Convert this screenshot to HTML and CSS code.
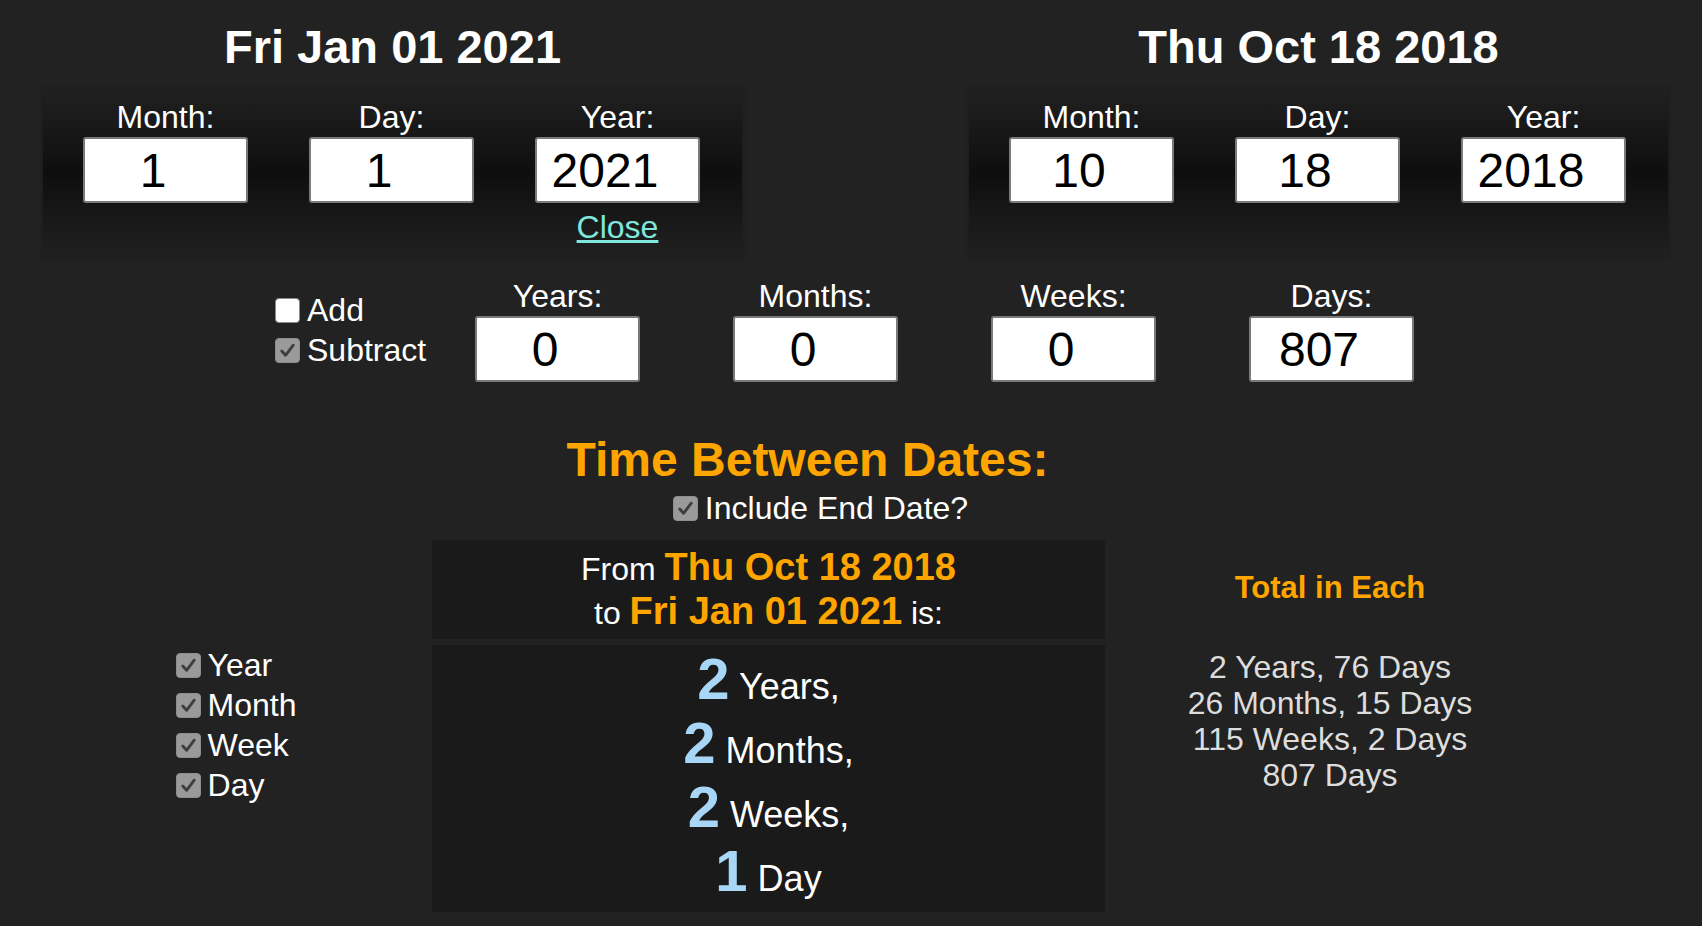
FILE: index.html
```html
<!DOCTYPE html>
<html lang="en">
  <head>
    <meta charset="UTF-8" />
    <meta name="viewport" content="width=device-width, initial-scale=1.0" />
    <title>Time Between Dates</title>
    <link rel="stylesheet" href="styles.css">
  </head>
  <body>
    <div class="dates">
      <div class="date-block">
        <h2 class="date-title">Fri Jan 01 2021</h2>
        <div class="picker">
          <div class="field">
            <label>Month:</label>
            <input class="num" type="text" value="1">
          </div>
          <div class="field">
            <label>Day:</label>
            <input class="num" type="text" value="1">
          </div>
          <div class="field">
            <label>Year:</label>
            <input class="num" type="text" value="2021">
            <a class="close" href="#">Close</a>
          </div>
        </div>
      </div>
      <div class="date-block">
        <h2 class="date-title">Thu Oct 18 2018</h2>
        <div class="picker">
          <div class="field">
            <label>Month:</label>
            <input class="num" type="text" value="10">
          </div>
          <div class="field">
            <label>Day:</label>
            <input class="num" type="text" value="18">
          </div>
          <div class="field">
            <label>Year:</label>
            <input class="num" type="text" value="2018">
          </div>
        </div>
      </div>
    </div>

    <div class="adjust">
      <div class="ops">
        <label class="check"><span class="box"></span>Add</label>
        <label class="check"><span class="box on"><svg viewBox="0 0 24 24"><path d="M6 12.5 L10 17 L18 6.5"/></svg></span>Subtract</label>
      </div>
      <div class="field">
        <label>Years:</label>
        <input class="num" type="text" value="0">
      </div>
      <div class="field">
        <label>Months:</label>
        <input class="num" type="text" value="0">
      </div>
      <div class="field">
        <label>Weeks:</label>
        <input class="num" type="text" value="0">
      </div>
      <div class="field">
        <label>Days:</label>
        <input class="num" type="text" value="807">
      </div>
    </div>

    <div class="between">
      <h1 class="between-title">Time Between Dates:</h1>
      <div class="include">
        <label class="check"><span class="box on"><svg viewBox="0 0 24 24"><path d="M6 12.5 L10 17 L18 6.5"/></svg></span>Include End Date?</label>
      </div>

      <div class="summary">
        From <span class="hl">Thu Oct 18 2018</span><br>
        to <span class="hl">Fri Jan 01 2021</span> is:
      </div>
      <div class="totals">
        <div class="totals-title">Total in Each</div>
        <div>2 Years, 76 Days</div>
        <div>26 Months, 15 Days</div>
        <div>115 Weeks, 2 Days</div>
        <div>807 Days</div>
      </div>

      <div class="units">
        <label class="check"><span class="box on"><svg viewBox="0 0 24 24"><path d="M6 12.5 L10 17 L18 6.5"/></svg></span>Year</label>
        <label class="check"><span class="box on"><svg viewBox="0 0 24 24"><path d="M6 12.5 L10 17 L18 6.5"/></svg></span>Month</label>
        <label class="check"><span class="box on"><svg viewBox="0 0 24 24"><path d="M6 12.5 L10 17 L18 6.5"/></svg></span>Week</label>
        <label class="check"><span class="box on"><svg viewBox="0 0 24 24"><path d="M6 12.5 L10 17 L18 6.5"/></svg></span>Day</label>
      </div>
      <div class="results">
        <div><span class="n">2</span> Years,</div>
        <div><span class="n">2</span> Months,</div>
        <div><span class="n">2</span> Weeks,</div>
        <div><span class="n">1</span> Day</div>
      </div>
    </div>
  </body>
</html>
```

FILE: styles.css
```css
* {
  padding: 0;
  margin: 0;
  box-sizing: border-box;
}
body {
  background-color: #222;
  color: #fff;
  font-family: "Liberation Sans", Arial, sans-serif;
  font-size: 32px;
  width: 1702px;
  height: 926px;
  overflow: hidden;
}
.dates {
  display: flex;
  gap: 227px;
  padding-left: 43px;
}
.date-block {
  width: 699px;
}
.date-title {
  font-size: 47px;
  line-height: 54px;
  font-weight: bold;
  text-align: center;
  padding-top: 20px;
  margin-bottom: 15px;
}
.picker {
  display: flex;
  gap: 61px;
  min-height: 168px;
  padding: 10px 42px 12px 40px;
  background: linear-gradient(to bottom, #202020 0%, #161616 30%, #0e0e0e 50%, #161616 70%, #202020 100%);
  box-shadow: 0 0 4px rgba(20, 20, 20, 0.6);
}
.field {
  display: flex;
  flex-direction: column;
  align-items: center;
  width: 165px;
}
.field label {
  font-size: 32px;
  line-height: 36px;
  margin-bottom: 2px;
}
.num {
  width: 165px;
  height: 66px;
  border: 2px solid #7a7a7a;
  border-radius: 3px;
  background-color: #fff;
  color: #000;
  font-family: "Liberation Sans", Arial, sans-serif;
  font-size: 48px;
  text-align: center;
  padding-right: 25px;
  outline: none;
}
.close {
  margin-top: 6px;
  font-size: 32px;
  line-height: 36px;
  color: #7fe6dc;
  text-decoration: underline;
}
.adjust {
  display: flex;
  align-items: center;
  gap: 93px;
  padding-left: 275px;
  margin-top: 21px;
}
.adjust .ops {
  width: 107px;
  display: flex;
  flex-direction: column;
}
.check {
  display: flex;
  align-items: center;
  gap: 7px;
  font-size: 32px;
  line-height: 40px;
  white-space: nowrap;
}
.box {
  width: 25px;
  height: 25px;
  border-radius: 4px;
  background-color: #fff;
  border: 1px solid #8a8a8a;
  flex-shrink: 0;
}
.box.on {
  background-color: #9a9a9a;
  border-color: #8e8e8e;
}
.box svg {
  display: block;
  width: 23px;
  height: 23px;
}
.box path {
  fill: none;
  stroke: #3e3e3e;
  stroke-width: 3;
  stroke-linecap: round;
  stroke-linejoin: round;
}
.between {
  display: grid;
  grid-template-columns: 392px 673px 450px;
  margin-left: 40px;
  margin-top: 50px;
}
.between-title {
  grid-column: 1 / -1;
  font-size: 48px;
  line-height: 56px;
  font-weight: bold;
  color: #ffa500;
  text-align: center;
  padding-left: 20px;
}
.include {
  grid-column: 1 / -1;
  display: flex;
  justify-content: center;
  padding-left: 46px;
  margin-bottom: 12px;
}
.summary {
  grid-column: 2;
  grid-row: 3;
  background-color: #1a1a1a;
  text-align: center;
  font-size: 32px;
  line-height: 44px;
  padding: 7px 0 4px;
}
.hl {
  color: #ffa500;
  font-weight: bold;
  font-size: 38px;
  line-height: 1;
}
.totals {
  grid-column: 3;
  grid-row: 3 / 5;
  text-align: center;
  font-size: 32px;
  line-height: 36px;
  color: #ddd;
  padding-top: 30px;
}
.totals-title {
  font-weight: bold;
  font-size: 31px;
  color: #ffa500;
  margin-bottom: 43px;
}
.units {
  grid-column: 1;
  grid-row: 4;
  justify-self: center;
  padding-top: 6px;
}
.results {
  grid-column: 2;
  grid-row: 4;
  margin-top: 6px;
  background-color: #1a1a1a;
  text-align: center;
  font-size: 36px;
  line-height: 64px;
  padding: 10px 0 1px;
}
.results .n {
  color: #a8d6f6;
  font-weight: bold;
  font-size: 58px;
  line-height: 0;
}
```
